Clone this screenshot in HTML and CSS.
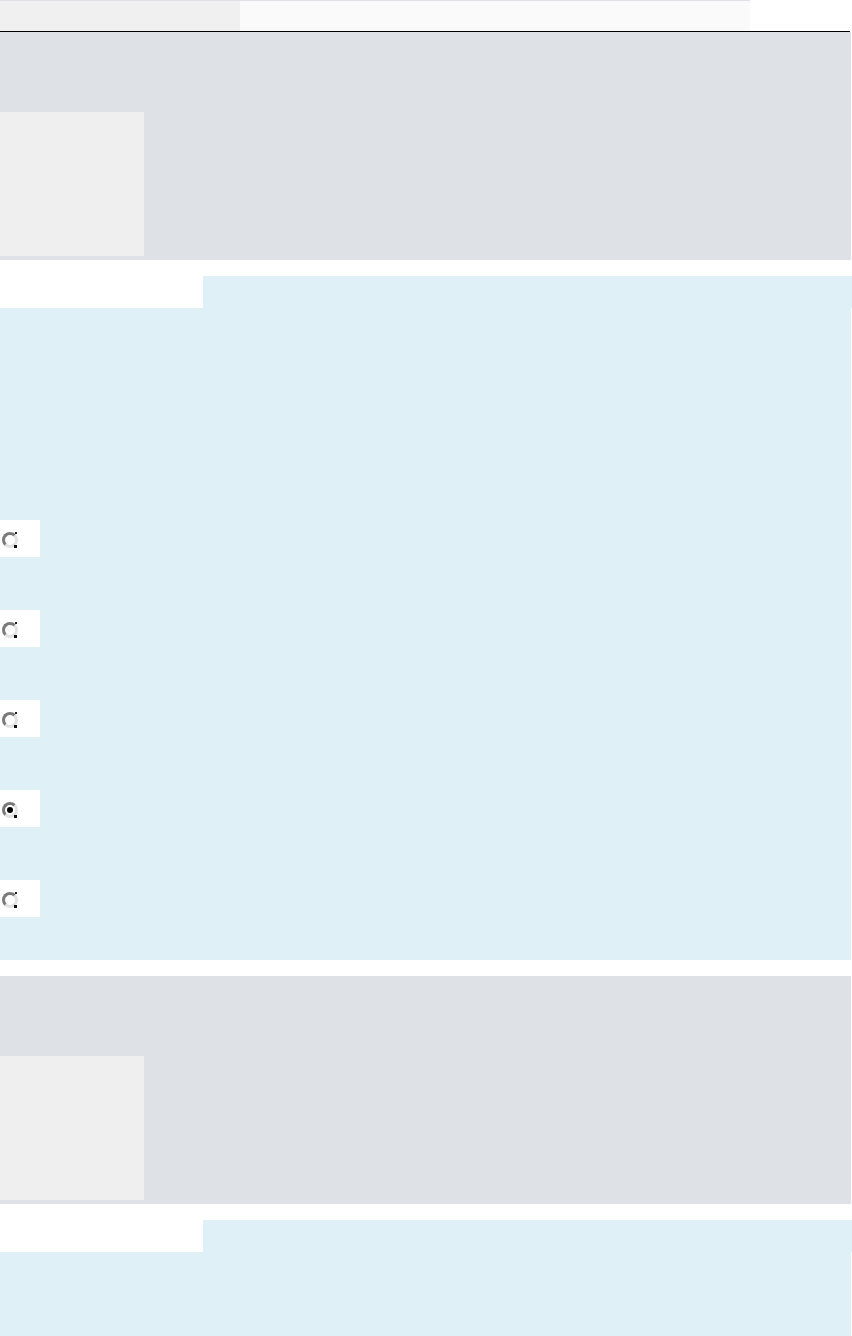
FILE: index.html
```html
<!DOCTYPE html>
<html>
<head>
  <meta name="viewport" content="width=device-width, initial-scale=1">
  <title>Options</title>
  <link rel="stylesheet" href="styles.css">
</head>
<body>
  <div class="tabbar">
    <div class="tab active"></div>
    <div class="tab"></div>
  </div>
  <div class="rule"></div>

  <div class="panel">
    <div class="thumb"></div>
  </div>

  <div class="card">
    <div class="card-head">
      <div class="card-tab"></div>
      <div class="card-fill"></div>
    </div>
    <div class="card-body">
      <label class="opt"><span class="radio"></span></label>
      <label class="opt"><span class="radio"></span></label>
      <label class="opt"><span class="radio"></span></label>
      <label class="opt"><span class="radio checked"></span></label>
      <label class="opt"><span class="radio"></span></label>
    </div>
  </div>

  <div class="panel">
    <div class="thumb"></div>
  </div>

  <div class="card">
    <div class="card-head">
      <div class="card-tab"></div>
      <div class="card-fill"></div>
    </div>
    <div class="card-body short"></div>
  </div>
</body>
</html>
```

FILE: styles.css
```css
html {font-family: "Liberation Sans", Arial, sans-serif;}
body {margin: 0; background: #fff; width: 852px;}

.tabbar {display: flex; width: 750px; height: 30px; border-top: 1px solid #dee1e6;}
.tab {flex: 1; background: #fafafa;}
.tab.active {flex: 0 0 240px; background: #f0f0f0;}
.rule {width: 850px; height: 1px; background: #000;}

.panel {width: 851px; height: 228px; background: #dee1e6; padding-top: 80px; box-sizing: border-box; margin-bottom: 16px;}
.thumb {width: 144px; height: 144px; background: #efefef;}

.card {width: 852px; margin-bottom: 16px;}
.card-head {display: flex; height: 32px;}
.card-tab {flex: 0 0 203px; background: #fff;}
.card-fill {flex: 1; background: #dff0f6;}
.card-body {width: 851px; height: 652px; background: #dff0f6; padding-top: 212px; box-sizing: border-box; display: flex; flex-direction: column; gap: 53px;}
.card-body.short {height: 84px; padding-top: 0;}

.opt {display: flex; align-items: center; width: 40px; height: 37px; background: #fff;}
.radio {position: relative; display: block; width: 16px; height: 16px; margin-left: 2px; margin-top: 2px; border-radius: 50%; background: #fff;
  border: 3px solid; border-color: #7a7a7a #e2e2e2 #e2e2e2 #7a7a7a; box-sizing: border-box;}
.radio:after {content: ""; position: absolute; right: -2px; bottom: -3px; width: 3px; height: 3px; background: #111;}
.radio:before {content: ""; position: absolute; right: -2px; top: -3px; width: 2px; height: 2px; background: #222;}
.radio.checked:before {right: auto; left: 2px; top: 2px; width: 6px; height: 6px; border-radius: 50%; background: #000;}
```
